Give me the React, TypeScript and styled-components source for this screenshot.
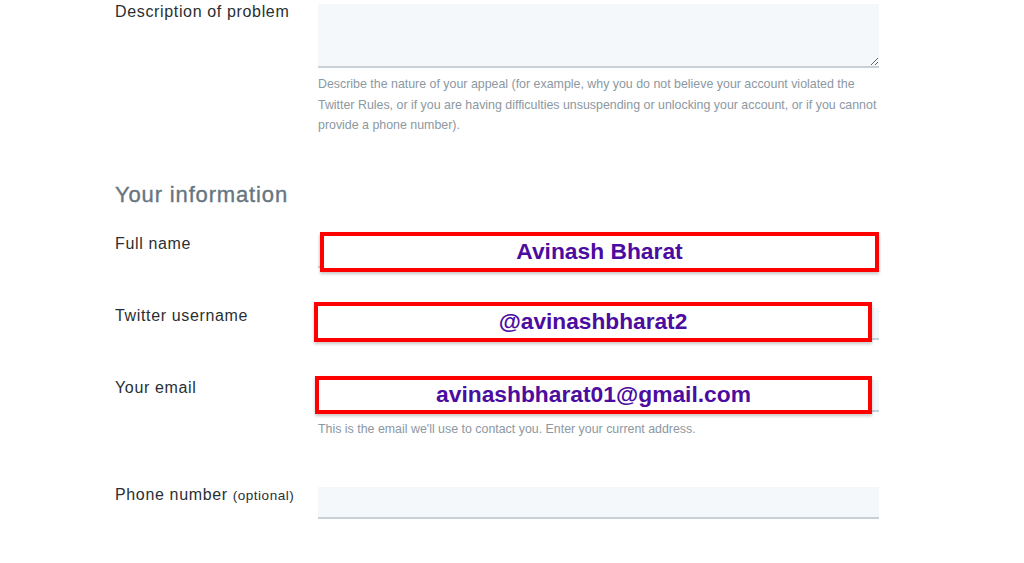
import * as React from 'react'
import styled, { createGlobalStyle } from 'styled-components'

const GlobalStyle = createGlobalStyle`
  html, body {
    margin: 0;
    padding: 0;
    background: #fff;
  }
  body {
    font-family: "Liberation Sans", Arial, Helvetica, sans-serif;
    color: #292f33;
  }
`

const Form = styled.div`
  width: 764px;
  padding: 2px 0 0 115px;
`

const Row = styled.div<{ $gap?: number }>`
  display: grid;
  grid-template-columns: 203px 561px;
  align-items: start;
  margin-top: ${p => p.$gap || 0}px;
`

const Label = styled.div`
  font-size: 16px;
  line-height: 20px;
  letter-spacing: 0.65px;
  color: #292f33;
`

const Optional = styled.span`
  font-size: 13.5px;
  letter-spacing: 0.5px;
`

const Field = styled.div`
  position: relative;
  margin-top: 2px;
`

const TextArea = styled.textarea`
  display: block;
  box-sizing: border-box;
  width: 561px;
  height: 64px;
  margin: 0;
  padding: 6px 8px;
  border: none;
  border-bottom: 2px solid #c8d1d8;
  background: #f5f8fa;
  resize: vertical;
  font: inherit;
  outline: none;
`

const Input = styled.input`
  display: block;
  box-sizing: border-box;
  width: 561px;
  height: 32px;
  margin: 0;
  padding: 0 8px;
  border: none;
  border-bottom: 2px solid #c8d1d8;
  background: #f5f8fa;
  font: inherit;
  outline: none;
`

const Help = styled.p<{ $top: number }>`
  margin: ${p => p.$top}px 0 0;
  font-size: 12.4px;
  line-height: 20.5px;
  color: #8c98a2;
`

const Heading = styled.h2`
  margin: 45px 0 0;
  font-size: 22px;
  line-height: 28px;
  font-weight: normal;
  letter-spacing: 0.85px;
  color: #66757f;
  -webkit-text-stroke: 0.35px #66757f;
`

// red annotation drawn over a filled field
const Callout = styled.div<{ $x: number; $y: number; $w: number; $h: number; $size: number }>`
  position: absolute;
  left: ${p => p.$x}px;
  top: ${p => p.$y}px;
  width: ${p => p.$w}px;
  height: ${p => p.$h}px;
  box-sizing: border-box;
  border: 4px solid #ff0000;
  background: #fff;
  box-shadow: 0 2px 3px rgba(0, 0, 0, 0.22);
  display: flex;
  align-items: center;
  justify-content: center;
  font-size: ${p => p.$size}px;
  font-weight: bold;
  color: #4b0c9f;
  white-space: nowrap;
`

export default function App() {
  return (
    <>
      <GlobalStyle />
      <Form>
        <Row>
          <Label>Description of problem</Label>
          <div>
            <Field>
              <TextArea />
            </Field>
            <Help $top={6}>
              Describe the nature of your appeal (for example, why you do not believe your account violated the
              Twitter Rules, or if you are having difficulties unsuspending or unlocking your account, or if you cannot
              provide a phone number).
            </Help>
          </div>
        </Row>

        <Heading>Your information</Heading>

        <Row $gap={25}>
          <Label>Full name</Label>
          <Field>
            <Input />
            <Callout $x={2} $y={-4} $w={559} $h={40} $size={22.8}>Avinash Bharat</Callout>
          </Field>
        </Row>

        <Row $gap={38}>
          <Label>Twitter username</Label>
          <Field>
            <Input />
            <Callout $x={-4} $y={-6} $w={558} $h={40} $size={22.7}>@avinashbharat2</Callout>
          </Field>
        </Row>

        <Row $gap={38}>
          <Label>Your email</Label>
          <div>
            <Field>
              <Input />
              <Callout $x={-3} $y={-4} $w={557} $h={38} $size={22.8}>avinashbharat01@gmail.com</Callout>
            </Field>
            <Help $top={7}>This is the email we'll use to contact you. Enter your current address.</Help>
          </div>
        </Row>

        <Row $gap={46}>
          <Label>
            Phone number <Optional>(optional)</Optional>
          </Label>
          <Field>
            <Input />
          </Field>
        </Row>
      </Form>
    </>
  )
}
